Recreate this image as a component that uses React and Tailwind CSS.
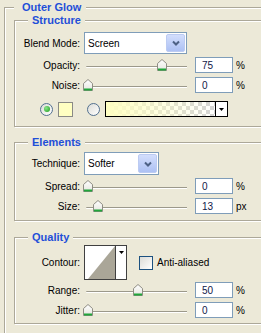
import React from 'react';

const groupBox = 'border border-[#aca899] shadow-[inset_1px_1px_0_#fff,1px_1px_0_#fff]';

function Legend({ children, outer }) {
  return (
    <legend
      className={`bg-[#ece9d8] text-[11px] leading-[13px] font-bold text-[#1f4fd8] ${
        outer ? 'ml-[9px] pl-[8px] pr-[5px]' : 'ml-[13px] pl-[4px] pr-[4px]'
      }`}
    >
      {children}
    </legend>
  );
}

function Label({ children }) {
  return <span className="w-[65px] shrink-0 text-right">{children}</span>;
}

function Thumb({ pos }) {
  return (
    <svg
      className="absolute top-[2px]"
      style={{ left: `${Math.round(pos * 99) - 3}px` }}
      width="10"
      height="12"
      viewBox="0 0 10 12"
    >
      <defs>
        <linearGradient id="thumbFill" x1="0" y1="0" x2="0" y2="1">
          <stop offset="0" stopColor="#ffffff" />
          <stop offset="1" stopColor="#e6e6df" />
        </linearGradient>
      </defs>
      <path d="M0.5 4.5 L5 0.5 L9.5 4.5 V11.5 H0.5 Z" fill="url(#thumbFill)" stroke="#8f8d84" />
      <rect x="1" y="9.5" width="8" height="2" fill="#21a63a" />
    </svg>
  );
}

function SliderRow({ label, value, pos, unit, className = '' }) {
  return (
    <div className={`flex h-[16px] items-center ${className}`}>
      <Label>{label}</Label>
      <div className="relative ml-[6px] h-[16px] w-[101px] shrink-0 pt-[9px]">
        <div className="h-[2px] rounded-l-full border-t border-[#9c998b] bg-white" />
        <Thumb pos={pos} />
      </div>
      <div className="ml-[8px] flex h-[16px] w-[38px] shrink-0 items-center border border-[#7f9db9] bg-white pl-[6px] text-[#101848]">
        {value}
      </div>
      <span className="ml-[3px]">{unit}</span>
    </div>
  );
}

function Select({ value, wide }) {
  return (
    <div
      className={`ml-[4px] flex items-center border border-[#7f9db9] bg-white p-[1px] ${
        wide ? 'h-[22px] w-[103px]' : 'h-[23px] w-[75px]'
      }`}
    >
      <span className="flex-1 pl-[2px]">{value}</span>
      <div className="flex h-full w-[19px] items-center justify-center rounded-[2px] border border-[#bccbf2] bg-gradient-to-b from-[#d3defc] to-[#adc1f4]">
        <svg width="8" height="6" viewBox="0 0 8 6">
          <path d="M1 1.5 L4 4.5 L7 1.5" stroke="#4d6185" strokeWidth="2" fill="none" />
        </svg>
      </div>
    </div>
  );
}

function Radio({ checked, className = '' }) {
  return (
    <div
      className={`flex h-[13px] w-[13px] shrink-0 items-center justify-center rounded-full border border-[#52708f] bg-gradient-to-br from-[#dcdcd7] to-white ${className}`}
    >
      {checked && (
        <div className="h-[6px] w-[6px] rounded-full bg-[radial-gradient(circle_at_35%_35%,#8ae68a,#1a9a1a)]" />
      )}
    </div>
  );
}

export default function App() {
  return (
    <div className="h-[333px] w-[261px] overflow-hidden bg-[#ece9d8] font-['Liberation_Sans',Arial,sans-serif] text-[10px] text-black">
      <div className="w-[300px] pl-[4px] pt-[1px]">
        <fieldset className={`${groupBox} pb-[40px]`}>
          <Legend outer>Outer Glow</Legend>
          <div className="pl-[9px]">
            {/* Structure */}
            <fieldset className={groupBox}>
              <Legend>Structure</Legend>
              <div className="pb-[9px] pt-[5px]">
                <div className="flex items-center">
                  <Label>Blend Mode:</Label>
                  <Select value="Screen" wide />
                </div>
                <SliderRow label="Opacity:" value="75" pos={0.75} unit="%" className="mt-[3px]" />
                <SliderRow label="Noise:" value="0" pos={0} unit="%" className="mt-[4px]" />
                <div className="mt-[8px] flex h-[16px] items-center">
                  <Radio checked className="ml-[25px]" />
                  <div className="ml-[5px] h-[15px] w-[15px] shrink-0 border border-[#8a8a86] bg-[#ffffc2]" />
                  <Radio className="ml-[14px]" />
                  <div className="ml-[5px] flex h-[16px] w-[123px] shrink-0 border border-black">
                    <div className="flex-1 [background-image:linear-gradient(to_right,#ffffc2,#ffffc200),conic-gradient(#d4d4d4_25%,#ffffff_0_50%,#d4d4d4_0_75%,#ffffff_0)] [background-size:100%_100%,8px_8px]" />
                    <div className="flex w-[12px] items-center justify-center border-l border-black bg-white">
                      <svg width="5" height="3" viewBox="0 0 5 3">
                        <polygon points="0,0 5,0 2.5,3" fill="#000" />
                      </svg>
                    </div>
                  </div>
                </div>
              </div>
            </fieldset>

            {/* Elements */}
            <fieldset className={`${groupBox} mt-[9px]`}>
              <Legend>Elements</Legend>
              <div className="pb-[6px] pt-[3px]">
                <div className="flex items-center">
                  <Label>Technique:</Label>
                  <Select value="Softer" />
                </div>
                <SliderRow label="Spread:" value="0" pos={0} unit="%" className="mt-[3px]" />
                <SliderRow label="Size:" value="13" pos={0.1} unit="px" className="mt-[4px]" />
              </div>
            </fieldset>

            {/* Quality */}
            <fieldset className={`${groupBox} mt-[10px]`}>
              <Legend>Quality</Legend>
              <div className="pb-[5px] pt-[1px]">
                <div className="flex items-center">
                  <Label>Contour:</Label>
                  <div className="ml-[4px] flex h-[35px] w-[43px] shrink-0 border border-[#404040] bg-white">
                    <svg width="30" height="33" viewBox="0 0 30 33">
                      <polygon points="3,33 30,0 30,33" fill="#aaa698" />
                    </svg>
                    <div className="flex w-[11px] justify-center border-l border-[#404040] pt-[5px]">
                      <svg width="5" height="3" viewBox="0 0 5 3">
                        <polygon points="0,0 5,0 2.5,3" fill="#000" />
                      </svg>
                    </div>
                  </div>
                  <div className="ml-[12px] h-[14px] w-[14px] shrink-0 border border-[#1c5180] bg-gradient-to-br from-[#dcdcd7] to-white" />
                  <span className="ml-[4px]">Anti-aliased</span>
                </div>
                <SliderRow label="Range:" value="50" pos={0.5} unit="%" className="mt-[2px]" />
                <SliderRow label="Jitter:" value="0" pos={0} unit="%" className="mt-[4px]" />
              </div>
            </fieldset>
          </div>
        </fieldset>
      </div>
    </div>
  );
}
